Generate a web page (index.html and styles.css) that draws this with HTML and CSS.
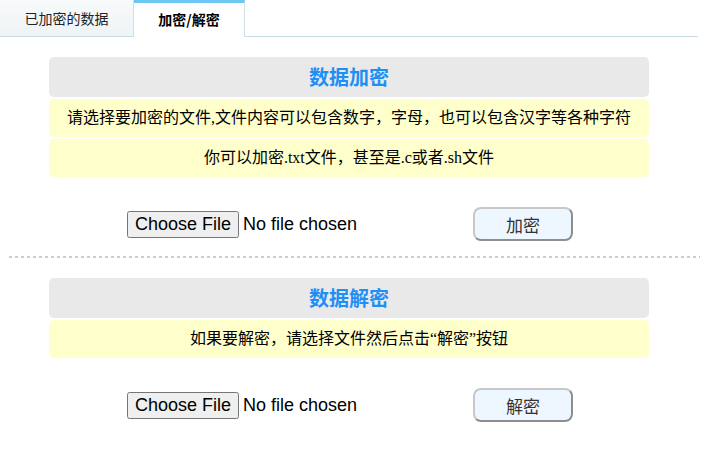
FILE: index.html
```html
<!DOCTYPE html>
<html lang="zh">
<head>
<meta charset="utf-8">
<title>加密/解密</title>
<link rel="stylesheet" href="styles.css">
</head>
<body>
<div class="tabs">
  <div class="tab">已加密的数据</div>
  <div class="tab active">加密/解密</div>
</div>

<div class="section first">
  <div class="panel">
    <div class="panel-title">数据加密</div>
    <div class="note">请选择要加密的文件,文件内容可以包含数字，字母，也可以包含汉字等各种字符</div>
    <div class="note">你可以加密.txt文件，甚至是.c或者.sh文件</div>
  </div>
  <div class="file-row">
    <input class="file" type="file">
    <button class="action" type="button">加密</button>
  </div>
</div>

<div class="divider"></div>

<div class="section second">
  <div class="panel">
    <div class="panel-title">数据解密</div>
    <div class="note">如果要解密，请选择文件然后点击“解密”按钮</div>
  </div>
  <div class="file-row">
    <input class="file" type="file">
    <button class="action" type="button">解密</button>
  </div>
</div>
</body>
</html>
```

FILE: styles.css
```css
body {
  margin: 0;
  background: #fff;
  font-family: "Liberation Serif", "Noto Sans CJK SC", serif;
  color: #000;
}

.tabs {
  display: flex;
  width: 698px;
  height: 36px;
  border-bottom: 1px solid #c9dbe4;
}

.tab {
  width: 134px;
  height: 36px;
  box-sizing: border-box;
  border-right: 1px solid #d3dfe6;
  background: linear-gradient(#f8fafb, #eef3f5);
  font-family: "Noto Sans CJK SC", sans-serif;
  font-size: 14px;
  line-height: 36px;
  text-align: center;
  color: #222;
}

.tab.active {
  width: 111px;
  background: #fff;
  border-top: 3px solid #6cc8f2;
  border-right: 1px solid #d3dfe6;
  line-height: 33px;
  font-weight: bold;
  color: #000;
  height: 37px;
  margin-bottom: -1px;
}

.section {
  padding-left: 49px;
  width: 600px;
}

.section.first {
  padding-top: 20px;
}

.panel-title {
  height: 40px;
  line-height: 39px;
  background: #e9e9e9;
  border-radius: 5px;
  text-align: center;
  font-family: "Noto Sans CJK SC", sans-serif;
  font-size: 20px;
  font-weight: bold;
  color: #1e8ff5;
}

.note {
  margin-top: 2px;
  height: 38px;
  line-height: 37px;
  background: #ffffcc;
  border-radius: 5px;
  text-align: center;
  font-size: 16px;
  white-space: nowrap;
}

.file-row {
  display: flex;
  align-items: center;
  height: 34px;
  margin-top: 30px;
  padding-left: 78px;
}

.file {
  width: 346px;
  font-family: "Liberation Sans", Arial, sans-serif;
  font-size: 18px;
  margin: 0;
}

.action {
  width: 100px;
  height: 34px;
  margin: 0;
  padding: 0;
  border: 2px solid;
  border-color: #c8c8c8 #8e8e8e #8e8e8e #c8c8c8;
  border-radius: 8px;
  background: #eef6ff;
  font-family: "Noto Sans CJK SC", sans-serif;
  font-size: 17px;
  color: #333;
}

.divider {
  margin: 15px 0 20px 9px;
  width: 691px;
  height: 2px;
  background: repeating-linear-gradient(to right, #cccccc 0 3px, transparent 3px 6px);
}
```
